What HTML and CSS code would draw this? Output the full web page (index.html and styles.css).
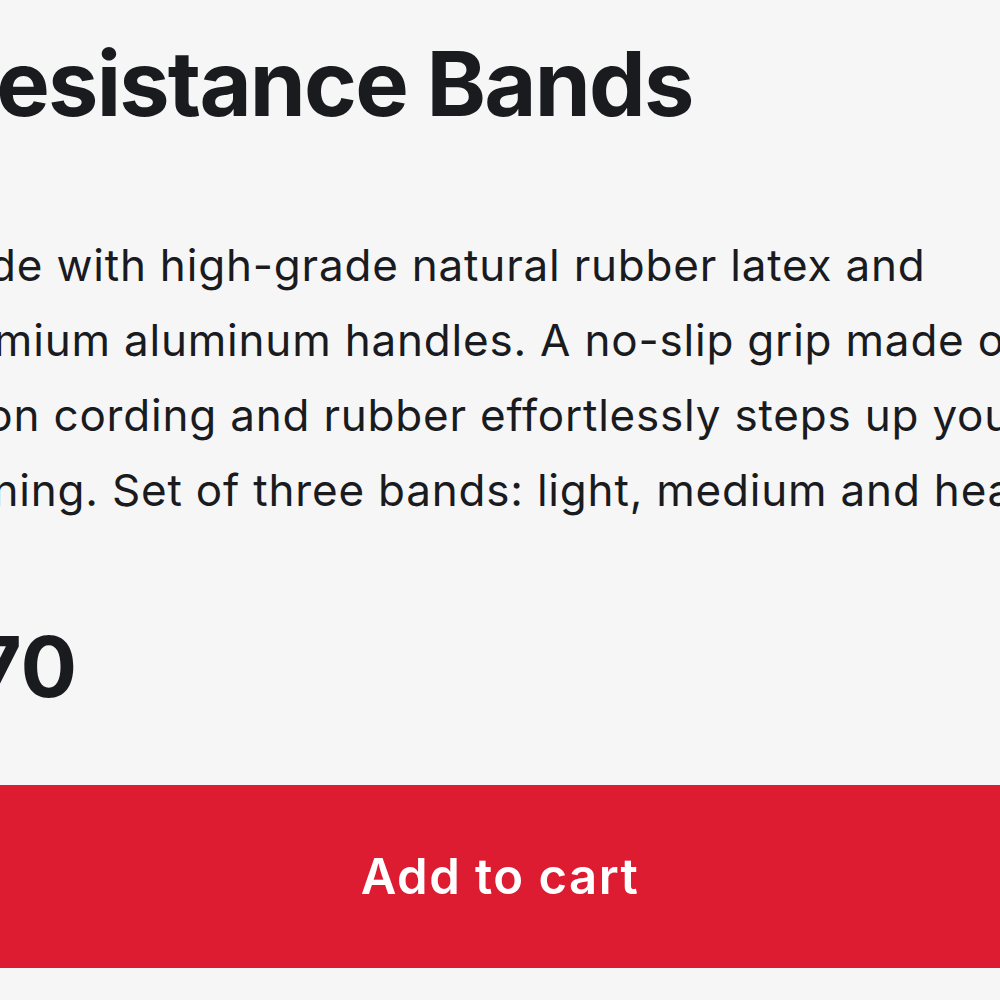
FILE: index.html
```html
<!DOCTYPE html>
<html lang="en">
<head>
    <meta charset="UTF-8">
    <meta name="viewport" content="width=device-width, initial-scale=1.0">
    <title>Resistance Bands</title>
    <link rel="stylesheet" href="styles.css">
</head>
<body>
    <main class="product">
        <h1 class="product-title">Resistance Bands</h1>
        <p class="product-desc">Made with high-grade natural rubber latex and premium aluminum handles. A no-slip grip made of nylon cording and rubber effortlessly steps up your training. Set of three bands: light, medium and heavy.</p>
        <div class="product-price">$70</div>
        <button type="button" class="add-to-cart">Add to cart</button>
    </main>
</body>
</html>
```

FILE: styles.css
```css
body {
    margin: 0;
    background-color: #f6f6f6;
    font-family: Inter, "Noto Sans", sans-serif;
    color: #1a1b1f;
    overflow: hidden;
}
.product {
    display: flex;
    flex-direction: column;
    width: 1120px;
    margin-left: -60px;
    padding-top: 30px;
}
.product-title {
    margin: 0;
    font-size: 90px;
    font-weight: 700;
    line-height: 1.2;
    letter-spacing: -1.8px;
}
.product-desc {
    margin: 90px -60px 0 -17px;
    font-size: 44px;
    line-height: 75px;
    letter-spacing: 0.8px;
}
.product-price {
    margin: 89px 0 0 -22px;
    font-size: 84px;
    font-weight: 700;
    line-height: 1.2;
}
.add-to-cart {
    margin-top: 67px;
    height: 183px;
    padding: 0;
    border: none;
    border-radius: 0;
    background-color: #dd1c32;
    color: white;
    font-family: inherit;
    font-size: 49px;
    font-weight: 600;
    letter-spacing: 1.5px;
    cursor: pointer;
}
```
